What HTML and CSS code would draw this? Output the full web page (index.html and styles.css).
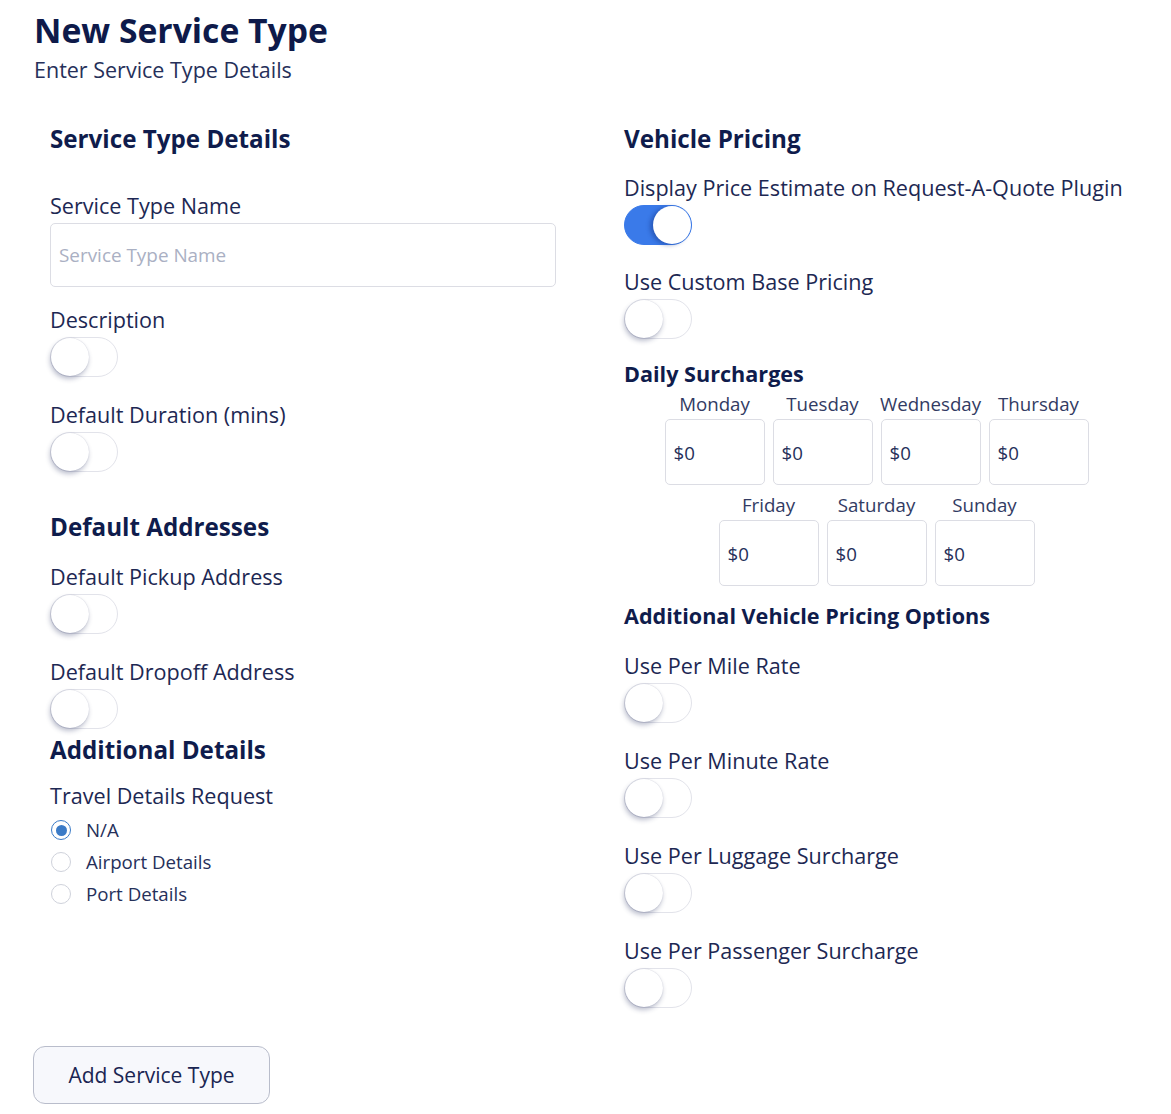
FILE: index.html
```html
<!DOCTYPE html>
<html lang="en">
<head>
<meta charset="utf-8">
<title>New Service Type</title>
<link rel="stylesheet" href="styles.css">
</head>
<body>
<div class="page">
  <header class="page-head">
    <h1 class="title">New Service Type</h1>
    <p class="subtitle">Enter Service Type Details</p>
  </header>

  <div class="columns">
    <section class="col">
      <h2 class="heading">Service Type Details</h2>
      <label class="label mt-38">Service Type Name</label>
      <input class="text-input" type="text" placeholder="Service Type Name">

      <div class="label mt-19">Description</div>
      <div class="toggle"><span class="knob"></span></div>

      <div class="label mt-24">Default Duration (mins)</div>
      <div class="toggle"><span class="knob"></span></div>

      <h2 class="heading mt-40">Default Addresses</h2>
      <div class="label mt-21">Default Pickup Address</div>
      <div class="toggle"><span class="knob"></span></div>

      <div class="label mt-24">Default Dropoff Address</div>
      <div class="toggle"><span class="knob"></span></div>

      <h2 class="heading mt-6">Additional Details</h2>
      <div class="label mt-17">Travel Details Request</div>
      <div class="radios">
        <div class="radio-row"><span class="radio checked"></span><span class="radio-text">N/A</span></div>
        <div class="radio-row"><span class="radio"></span><span class="radio-text">Airport Details</span></div>
        <div class="radio-row"><span class="radio"></span><span class="radio-text">Port Details</span></div>
      </div>
    </section>

    <section class="col">
      <h2 class="heading">Vehicle Pricing</h2>
      <div class="label mt-20">Display Price Estimate on Request-A-Quote Plugin</div>
      <div class="toggle on"><span class="knob"></span></div>

      <div class="label mt-23">Use Custom Base Pricing</div>
      <div class="toggle"><span class="knob"></span></div>

      <h3 class="subheading mt-20">Daily Surcharges</h3>
      <div class="days">
        <div class="day"><div class="day-name">Monday</div><div class="day-box">$0</div></div>
        <div class="day"><div class="day-name">Tuesday</div><div class="day-box">$0</div></div>
        <div class="day"><div class="day-name">Wednesday</div><div class="day-box">$0</div></div>
        <div class="day"><div class="day-name">Thursday</div><div class="day-box">$0</div></div>
        <div class="day"><div class="day-name">Friday</div><div class="day-box">$0</div></div>
        <div class="day"><div class="day-name">Saturday</div><div class="day-box">$0</div></div>
        <div class="day"><div class="day-name">Sunday</div><div class="day-box">$0</div></div>
      </div>

      <h3 class="subheading mt-15">Additional Vehicle Pricing Options</h3>
      <div class="label mt-21">Use Per Mile Rate</div>
      <div class="toggle"><span class="knob"></span></div>

      <div class="label mt-24">Use Per Minute Rate</div>
      <div class="toggle"><span class="knob"></span></div>

      <div class="label mt-24">Use Per Luggage Surcharge</div>
      <div class="toggle"><span class="knob"></span></div>

      <div class="label mt-24">Use Per Passenger Surcharge</div>
      <div class="toggle"><span class="knob"></span></div>
    </section>
  </div>

  <button class="submit" type="button">Add Service Type</button>
</div>
</body>
</html>
```

FILE: styles.css
```css
* { box-sizing: border-box; }

html, body {
  margin: 0;
  padding: 0;
  background: #ffffff;
}

body {
  font-family: "Open Sans", "Noto Sans", sans-serif;
  color: #1d2853;
}

.page {
  padding: 9px 42px 0 33px;
}

.page-head {
  padding-left: 1px;
}

.title {
  margin: 0;
  font-size: 33.7px;
  line-height: 42px;
  font-weight: 700;
  color: #0e1a4a;
}

.subtitle {
  margin: 5px 0 0;
  font-size: 21.5px;
  line-height: 28px;
  color: #26305a;
}

.columns {
  display: grid;
  grid-template-columns: 574px 505px;
  margin: 40px 0 0 17px;
}

.col {
  display: flex;
  flex-direction: column;
  align-items: flex-start;
}

.heading {
  margin: 0;
  font-size: 24.2px;
  line-height: 30px;
  font-weight: 700;
  color: #0f1c4c;
  white-space: nowrap;
}

.subheading {
  margin: 0;
  font-size: 21.6px;
  line-height: 30px;
  font-weight: 700;
  color: #0f1c4c;
  white-space: nowrap;
}

.label {
  display: block;
  font-size: 21.6px;
  line-height: 28px;
  color: #1d2853;
  white-space: nowrap;
}

.mt-6 { margin-top: 6px; }
.mt-15 { margin-top: 15px; }
.mt-17 { margin-top: 17px; }
.mt-19 { margin-top: 19px; }
.mt-20 { margin-top: 20px; }
.mt-21 { margin-top: 21px; }
.mt-23 { margin-top: 23px; }
.mt-24 { margin-top: 24px; }
.mt-38 { margin-top: 38px; }
.mt-40 { margin-top: 40px; }

.text-input {
  margin-top: 3px;
  width: 506px;
  height: 64px;
  border: 1px solid #dcdde4;
  border-radius: 5px;
  padding: 0 8px;
  font-family: inherit;
  font-size: 18.9px;
  color: #1d2853;
  outline: none;
}

.text-input::placeholder {
  color: #aab0c3;
}

.toggle {
  position: relative;
  margin-top: 3px;
  width: 68px;
  height: 40px;
  border-radius: 20px;
  border: 1px solid #e2e3ea;
  background: #ffffff;
  flex-shrink: 0;
}

.toggle .knob {
  position: absolute;
  top: 0;
  left: 0;
  width: 38px;
  height: 38px;
  border-radius: 50%;
  background: #ffffff;
  box-shadow: -1px 3px 5px rgba(30, 40, 90, 0.3), 0 0 1px rgba(30, 40, 90, 0.25);
}

.toggle.on {
  background: #3a7ae9;
  border-color: #3a7ae9;
}

.toggle.on .knob {
  left: auto;
  right: 0;
  box-shadow: -3px 1px 4px rgba(20, 50, 130, 0.45);
}

.radios {
  margin-top: 4px;
  display: flex;
  flex-direction: column;
}

.radio-row {
  display: flex;
  align-items: center;
  height: 32px;
  padding-left: 1px;
}

.radio {
  position: relative;
  width: 20px;
  height: 20px;
  border-radius: 50%;
  border: 1px solid #cfd2db;
  background: #fff;
  flex-shrink: 0;
}

.radio.checked {
  border: 1.5px solid #3b7bc7;
}

.radio.checked::after {
  content: "";
  position: absolute;
  left: 50%;
  top: 50%;
  width: 11px;
  height: 11px;
  margin: -5.5px 0 0 -5.5px;
  border-radius: 50%;
  background: #3b7bc7;
}

.radio-text {
  margin-left: 15px;
  font-size: 18.7px;
  line-height: 24px;
  color: #26305a;
}

.days {
  margin-top: 3px;
  width: 505px;
  display: flex;
  flex-wrap: wrap;
  justify-content: center;
  row-gap: 8px;
}

.day {
  width: 100px;
  margin: 0 4px;
  display: flex;
  flex-direction: column;
  align-items: center;
}

.day-name {
  font-size: 18.7px;
  line-height: 24px;
  color: #323b63;
  white-space: nowrap;
}

.day-box {
  margin-top: 3px;
  width: 100px;
  height: 66px;
  border: 1px solid #dcdde4;
  border-radius: 5px;
  display: flex;
  align-items: center;
  padding-left: 8px;
  font-size: 18.7px;
  color: #26305a;
}

.submit {
  margin-top: 38px;
  width: 237px;
  height: 58px;
  border: 1px solid #b9bdcb;
  border-radius: 12px;
  background: #f7f8fc;
  font-family: inherit;
  font-size: 21px;
  color: #1a2552;
  cursor: pointer;
}
```
